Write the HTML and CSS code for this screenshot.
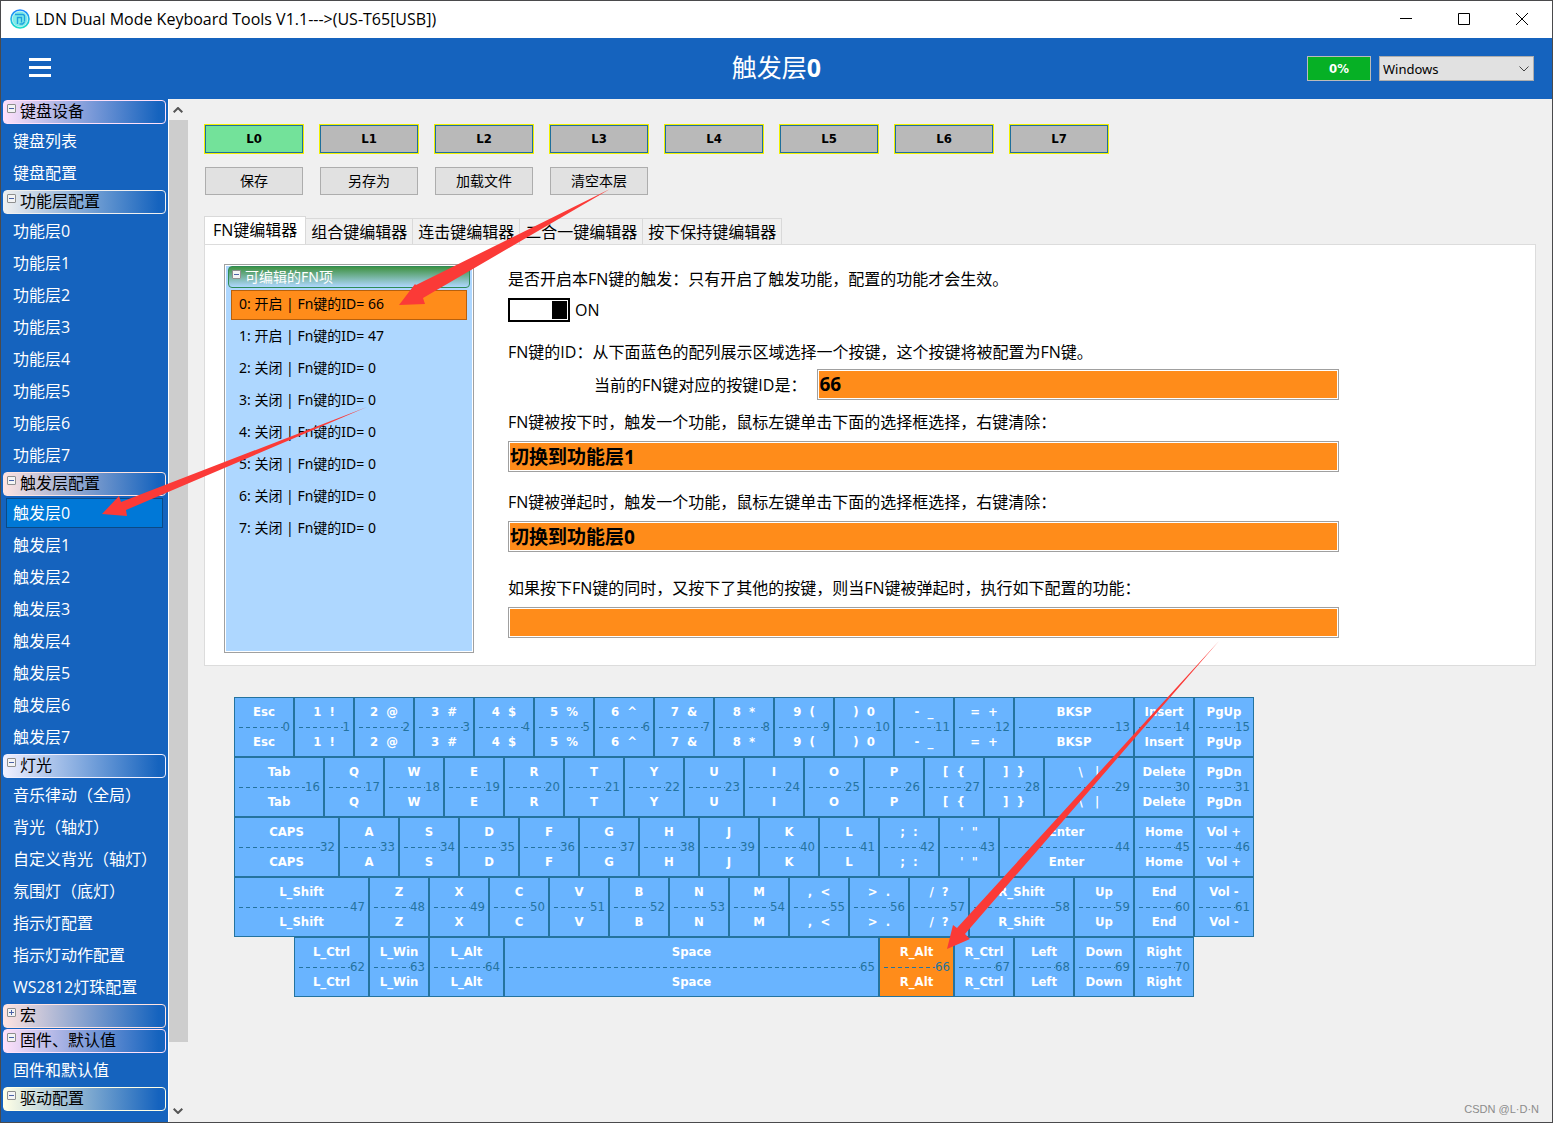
FILE: index.html
```
<!DOCTYPE html>
<html lang="zh-CN">
<head>
<meta charset="utf-8">
<title>LDN Dual Mode Keyboard Tools</title>
<link rel="stylesheet" href="styles.css">
</head>
<body>
<div class="window">
  <div class="titlebar">
    <svg class="logo" viewBox="0 0 20 20" width="20" height="20" aria-hidden="true">
      <defs><linearGradient id="ring" x1="0" y1="0" x2="0" y2="1"><stop offset="0" stop-color="#1e86ff"/><stop offset="1" stop-color="#19e0c8"/></linearGradient></defs>
      <circle cx="10" cy="10" r="9" fill="#c9f1f7" stroke="url(#ring)" stroke-width="1.6"/>
      <circle cx="10" cy="10" r="7.400" fill="#7febe6"/>
      <path d="M5 5.500h7.500a2 2 0 0 1 2 2v5M7.500 15V8.500h4v5M9.500 15h3l2-2" fill="none" stroke="#1fa0e0" stroke-width="1.400"/>
    </svg>
    <span class="titlebar-text">LDN Dual Mode Keyboard Tools V1.1---&gt;(US-T65[USB])</span>
    <div class="window-buttons">
      <button type="button" aria-label="最小化"><svg viewBox="0 0 12 12" width="12" height="12"><path d="M0 5.500h12"/></svg></button>
      <button type="button" aria-label="最大化"><svg viewBox="0 0 12 12" width="12" height="12"><path d="M.5.500h11v11H.500z"/></svg></button>
      <button type="button" aria-label="关闭"><svg viewBox="0 0 12 12" width="12" height="12"><path d="M0 0l12 12M12 0L0 12"/></svg></button>
    </div>
  </div>
  <header class="header">
    <button type="button" class="menu" aria-label="菜单"><span></span><span></span><span></span></button>
    <h1>触发层<b>0</b></h1>
    <div class="status">
      <span class="battery">0%</span>
      <span class="select-wrap">
        <select aria-label="系统"><option>Windows</option></select>
        <svg viewBox="0 0 10 6" width="10" height="6" aria-hidden="true"><path d="M.5.500L5 5l4.500-4.500"/></svg>
      </span>
    </div>
  </header>
  <div class="body">
    <nav class="sidebar" id="sidebar"></nav>
    <div class="scrollbar" aria-hidden="true">
      <svg viewBox="0 0 10 6" width="10" height="6"><path d="M.7 5.300L5 1l4.300 4.300"/></svg>
      <div class="thumb"></div>
      <svg viewBox="0 0 10 6" width="10" height="6"><path d="M.7.700L5 5l4.300-4.300"/></svg>
    </div>
    <main class="main">
      <div class="toolbar layers" id="layers"></div>
      <div class="toolbar actions">
        <button type="button">保存</button>
        <button type="button">另存为</button>
        <button type="button">加载文件</button>
        <button type="button">清空本层</button>
      </div>
      <div class="tabs" role="tablist">
        <button type="button" role="tab" aria-selected="true">FN键编辑器</button>
        <button type="button" role="tab">组合键编辑器</button>
        <button type="button" role="tab">连击键编辑器</button>
        <button type="button" role="tab">二合一键编辑器</button>
        <button type="button" role="tab">按下保持键编辑器</button>
      </div>
      <section class="panel">
        <div class="fn-list">
          <div class="fn-head"><i class="box"></i>可编辑的FN项</div>
          <ul id="fnItems"></ul>
        </div>
        <form class="form">
          <p>是否开启本FN键的触发：只有开启了触发功能，配置的功能才会生效。</p>
          <label class="switch"><input type="checkbox" checked><span>ON</span></label>
          <p>FN键的ID：从下面蓝色的配列展示区域选择一个按键，这个按键将被配置为FN键。</p>
          <div class="id-row"><label for="keyId">当前的FN键对应的按键ID是：</label><input id="keyId" type="text" value="66" readonly></div>
          <label class="row-label" for="down">FN键被按下时，触发一个功能，鼠标左键单击下面的选择框选择，右键清除：</label>
          <input id="down" type="text" value="切换到功能层1" readonly>
          <label class="row-label gap-m" for="up">FN键被弹起时，触发一个功能，鼠标左键单击下面的选择框选择，右键清除：</label>
          <input id="up" type="text" value="切换到功能层0" readonly>
          <label class="row-label gap-l" for="combo">如果按下FN键的同时，又按下了其他的按键，则当FN键被弹起时，执行如下配置的功能：</label>
          <input id="combo" type="text" value="" readonly>
        </form>
      </section>
      <div class="keyboard" id="keyboard"></div>
    </main>
  </div>
  <svg class="arrows" width="1553" height="1123" viewBox="0 0 1553 1123" aria-hidden="true">
    <path d="M610 189L416 285l-1-1-16 21 26-1-2-6z"/>
    <path d="M367 407L121 502l-2-6-17 18 25 2-1-6z"/>
    <path d="M1219 641L957 928l-4-3-6 24 23-10-5-5z"/>
  </svg>
  <span class="watermark">CSDN @L·D·N</span>
</div>
<script src="app.js"></script>
</body>
</html>
```
FILE: styles.css
```
* { box-sizing: border-box; }

body {
  margin: 0;
  font: 16px/24px "Open Sans", "Noto Sans CJK SC", sans-serif;
  color: #000;
}

button, input, select { font: inherit; color: inherit; }
p, h1, ul { margin: 0; padding: 0; }
ul { list-style: none; }

.window {
  position: relative;
  display: flex;
  flex-direction: column;
  height: 100vh;
  border: 1px solid #4a4a4c;
  background: #f0f0f0;
  overflow: hidden;
}

.titlebar {
  display: flex;
  flex: none;
  align-items: center;
  height: 37px;
  padding: 0 1px 2px 9px;
  background: #fff;
}
.titlebar-text { margin-left: 5px; }
.window-buttons { display: flex; margin-left: auto; }
.window-buttons button {
  display: flex;
  align-items: center;
  justify-content: center;
  width: 58px;
  height: 35px;
  border: 0;
  padding: 0;
  background: none;
}
.window-buttons svg { fill: none; stroke: #000; }

.header {
  display: grid;
  grid-template-columns: 1fr auto 1fr;
  flex: none;
  align-items: center;
  height: 61px;
  padding: 0 18px;
  background: #1563be;
}
.menu {
  display: flex;
  flex-direction: column;
  gap: 5px;
  width: 22px;
  margin-left: 10px;
  padding: 0 0 2px;
  border: 0;
  background: none;
}
.menu span { width: 22px; height: 3px; background: #fff; }
h1 {
  padding-bottom: 4px;
  font: 400 25px/32px "Noto Sans", "Noto Sans CJK SC", sans-serif;
  color: #fff;
}
.status { display: flex; gap: 8px; justify-content: flex-end; font-family: "Noto Sans", sans-serif; }
.battery {
  width: 64px;
  height: 25px;
  border: 1px solid #bbb;
  background: #06b025;
  color: #fff;
  font: 700 13px/23px "DejaVu Sans Condensed", "Noto Sans", sans-serif;
  text-align: center;
}
.select-wrap { position: relative; display: flex; }
.select-wrap select {
  width: 155px;
  height: 25px;
  padding: 0 3px;
  border: 1px solid #adadad;
  border-radius: 0;
  background: #e1e1e1;
  font-size: 13px;
  appearance: none;
}
.select-wrap svg { position: absolute; right: 5px; top: 10px; fill: none; stroke: #444; }

.body { display: flex; flex: 1; min-height: 0; }

.sidebar {
  flex: none;
  width: 167px;
  padding: 1px 2px 0;
  background: #1563be;
  overflow: hidden;
}
.sidebar summary {
  display: flex;
  height: 24px;
  margin-bottom: 1px;
  padding-left: 3px;
  border: 1px solid var(--tint);
  border-radius: 4px;
  background: linear-gradient(90deg, var(--tint), #1563be 96%);
  line-height: 20px;
}
.sidebar ul { padding-bottom: 1px; }
.sidebar li { padding: 1px 0; }
.sidebar a {
  display: block;
  height: 30px;
  margin: 0 3px;
  padding-left: 6px;
  border: 1px solid transparent;
  color: #fff;
  line-height: 28px;
  text-decoration: none;
  white-space: nowrap;
}
.sidebar a[aria-current] { border-color: #0a4a86; background: #0078d7; }

.box {
  flex: none;
  width: 9px;
  height: 9px;
  margin: 3px 4px 0 0;
  border: 1px solid #8e8f8f;
  border-radius: 1px;
  background: linear-gradient(90deg, #4b63a7, #4b63a7) center / 5px 1px no-repeat, #f4f4f4;
}
.box.plus {
  background: linear-gradient(#4b63a7, #4b63a7) center / 5px 1px no-repeat,
    linear-gradient(#4b63a7, #4b63a7) center / 1px 5px no-repeat, #f4f4f4;
}

.scrollbar {
  display: flex;
  flex: none;
  flex-direction: column;
  align-items: center;
  width: 20px;
  padding: 8px 1px 8px 0;
  border-left: 1px solid #fff;
}
.scrollbar svg { flex: none; fill: none; stroke: #555; stroke-width: 2; }
.thumb { flex: none; width: 19px; height: 922px; margin: 7px -1px auto 0; background: #cdcdcd; }

.main { flex: 1; min-width: 0; padding: 25px 16px 0; }

.toolbar { display: flex; gap: 15px; }
.toolbar button { flex: none; width: 100px; padding: 0; }
.layers button {
  height: 30px;
  border: 1px solid #f0f000;
  outline: 1px solid #1f6f9c;
  outline-offset: -2px;
  background: #b9b9b9;
  font: 700 13px/28px "DejaVu Sans Condensed", "Noto Sans", sans-serif;
}
.layers button.active { background: #73e29a; }
.actions { gap: 17px; margin: 13px 1px 0; }
.actions button {
  width: 98px;
  height: 28px;
  border: 1px solid #adadad;
  background: #e1e1e1;
  font-size: 14px;
  line-height: 24px;
}

.tabs { display: flex; align-items: flex-end; margin-top: 21px; }
.tabs button {
  height: 26px;
  padding: 0 5px;
  border: 1px solid #d9d9d9;
  border-left: 0;
  border-bottom: 0;
  background: #f0f0f0;
  line-height: 24px;
}
.tabs [aria-selected="true"] {
  height: 28px;
  padding: 0 8px 2px;
  border-left: 1px solid #d9d9d9;
  background: #fff;
}

.panel {
  display: flex;
  gap: 34px;
  align-items: flex-start;
  padding: 19px 19px 12px;
  border: 1px solid #dcdcdc;
  background: #fff;
}
.fn-list {
  flex: none;
  width: 250px;
  min-height: 389px;
  padding: 1px 3px;
  border: 1px solid #a0a0a0;
  outline: 1px solid #fff;
  outline-offset: -2px;
  background: #aed7ff;
  font: 14px/20px "Noto Sans", "Noto Sans CJK SC", sans-serif;
}
.fn-head {
  display: flex;
  height: 22px;
  padding-left: 3px;
  border: 1px solid #2e8b57;
  border-radius: 4px;
  background: linear-gradient(#3f9142, #aed7ff);
  color: #fff;
}
.fn-list ul { margin: 2px 3px; }
.fn-list button {
  display: block;
  width: 100%;
  height: 30px;
  margin-bottom: 2px;
  padding: 0 7px 2px;
  border: 1px solid transparent;
  background: none;
  text-align: left;
}
.fn-list button.active { border-color: #b8600c; background: #ff8c1a; }

.form { display: flex; flex: 0 1 831px; flex-direction: column; padding-top: 3px; }
.form p, .row-label { white-space: nowrap; }
.form input[type="text"] {
  width: 100%;
  height: 31px;
  padding: 0 1px 1px;
  border: 1px solid #a0a0a0;
  outline: 1px solid #fff;
  outline-offset: -2px;
  background: #ff8c1a;
  font-size: 19px;
  font-weight: 700;
}
.switch { display: flex; gap: 5px; align-items: center; height: 24px; margin: 7px 0 18px; }
.switch input {
  width: 62px;
  height: 24px;
  margin: 0;
  border: 2px solid #000;
  background: linear-gradient(#000, #000) right 1px center / 15px 18px no-repeat #fff;
  appearance: none;
}
.id-row { display: flex; gap: 11px; align-items: center; margin: 5px 0 10px 86px; }
.id-row label { flex: none; }
.row-label { margin-bottom: 7px; }
.gap-m { margin-top: 18px; }
.gap-l { margin-top: 24px; }

.keyboard {
  margin: 31px 0 0 30px;
  font: 700 13px/16px "DejaVu Sans Condensed", "Noto Sans", sans-serif;
  color: #fff;
}
.key-row { display: flex; }
.key-row:last-child { margin-left: 60px; }
.key {
  display: flex;
  flex: none;
  flex-direction: column;
  justify-content: space-between;
  height: 60px;
  padding: 6px 3px;
  border: 1px solid #24739f;
  background: #69b4ff;
  font: inherit;
  color: inherit;
  text-align: center;
  white-space: pre;
}
.key.active { background: #ff8c1a; }
.key-num {
  display: flex;
  align-items: center;
  height: 14px;
  color: #24739f;
  font-weight: 400;
}
.key-num::before {
  content: "";
  flex: 1;
  height: 1px;
  margin-left: 1px;
  background: repeating-linear-gradient(90deg, #24739f 0 4px, transparent 4px 7px);
}

.arrows { position: absolute; left: -1px; top: -1px; fill: #fb3a37; pointer-events: none; }
.watermark {
  position: absolute;
  right: 13px;
  bottom: 5px;
  font: 11px/16px "Liberation Sans", sans-serif;
  color: #8c8c8c;
}
```
FILE: app.js
```
const groups = [
  ['键盘设备', '#ffe1fa', ['键盘列表', '键盘配置']],
  ['功能层配置', '#f0f0f0', [0, 1, 2, 3, 4, 5, 6, 7].map(n => '功能层' + n)],
  ['触发层配置', '#ffe4e1', [0, 1, 2, 3, 4, 5, 6, 7].map(n => '触发层' + n)],
  ['灯光', '#f0f0ff', ['音乐律动（全局）', '背光（轴灯）', '自定义背光（轴灯）', '氛围灯（底灯）', '指示灯配置', '指示灯动作配置', 'WS2812灯珠配置']],
  ['宏', '#ffe4e1', [], true],
  ['固件、默认值', '#ffe1fa', ['固件和默认值']],
  ['驱动配置', '#ffffe6', []]
];
document.getElementById('sidebar').innerHTML = groups.map(([name, tint, items, closed]) =>
  `<details ${closed ? '' : 'open'}><summary style="--tint:${tint}"><i class="box ${closed ? 'plus' : ''}"></i>${name}</summary>` +
  `<ul>${items.map(t => `<li><a href="#" ${t === '触发层0' ? 'aria-current="page"' : ''}>${t}</a></li>`).join('')}</ul></details>`
).join('');

document.getElementById('layers').innerHTML = [0, 1, 2, 3, 4, 5, 6, 7].map(n =>
  `<button type="button" class="${n ? '' : 'active'}">L${n}</button>`).join('');

document.getElementById('fnItems').innerHTML = [66, 47, 0, 0, 0, 0, 0, 0].map((id, n) =>
  `<li><button type="button" class="${n ? '' : 'active'}">${n}: ${id ? '开启' : '关闭'} | Fn键的ID= ${id}</button></li>`).join('');

// Each entry is a key legend, with its width in pixels where it is not 60.
const rows = [
  ['Esc', '1  !', '2  @', '3  #', '4  $', '5  %', '6  ^', '7  &', '8  *', '9  (', ')  0', '-  _', '=  +', ['BKSP', 120], 'Insert', 'PgUp'],
  [['Tab', 90], 'Q', 'W', 'E', 'R', 'T', 'Y', 'U', 'I', 'O', 'P', '[  {', ']  }', ['\\   |', 90], 'Delete', 'PgDn'],
  [['CAPS', 105], 'A', 'S', 'D', 'F', 'G', 'H', 'J', 'K', 'L', ';  :', '\'  "', ['Enter', 135], 'Home', 'Vol +'],
  [['L_Shift', 135], 'Z', 'X', 'C', 'V', 'B', 'N', 'M', ',  <', '>  .', '/  ?', ['R_Shift', 105], 'Up', 'End', 'Vol -'],
  [['L_Ctrl', 75], 'L_Win', ['L_Alt', 75], ['Space', 375], ['R_Alt', 75], 'R_Ctrl', 'Left', 'Down', 'Right']
];
let index = 0;
const escapeHtml = s => s.replace(/&/g, '&amp;').replace(/</g, '&lt;');
document.getElementById('keyboard').innerHTML = rows.map(row =>
  `<div class="key-row">${row.map(key => {
    const [label, width] = Array.isArray(key) ? key : [key, 60];
    const text = escapeHtml(label);
    const n = index++;
    return `<button type="button" class="key ${n === 66 ? 'active' : ''}" style="width:${width}px"><span>${text}</span><span class="key-num">${n}</span><span>${text}</span></button>`;
  }).join('')}</div>`).join('');
```
